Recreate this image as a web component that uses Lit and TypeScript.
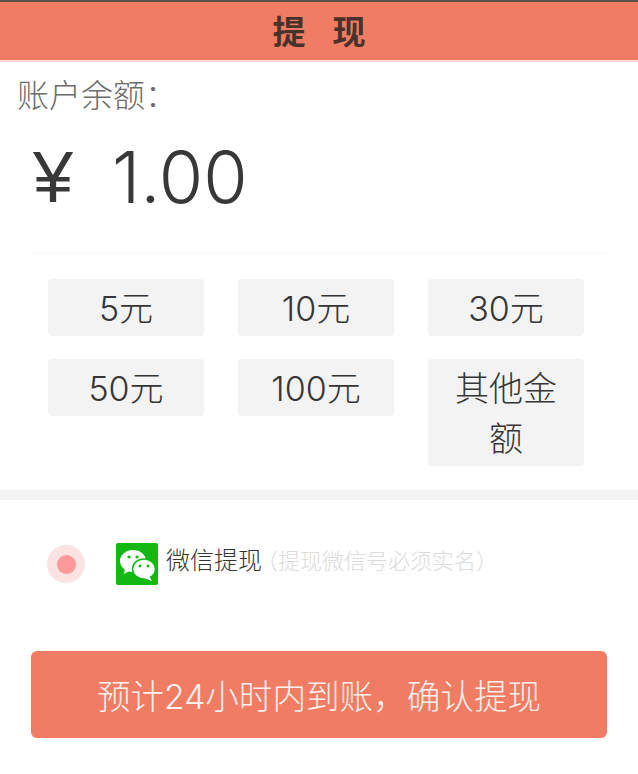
import { LitElement, html, css } from "lit";
import { customElement } from "lit/decorators.js";

@customElement("app-root")
export class AppRoot extends LitElement {
  static styles = css`
    :host { display: block; width: 638px; height: 774px; background: #fff; overflow: hidden;
      font-family: "Noto Sans CJK SC", sans-serif; color: #3c3c3c; }
    .head { height: 58px; border-top: 2px solid #5a5148; background: #f07c64; border-bottom: 2px solid #fbd9d2;
      display: flex; align-items: center; justify-content: center; font-size: 33px; line-height: 40px; font-weight: 700; color: #47332c; gap: 27px; }
    .head span { position: relative; top: -1px; }
    .label { padding: 13px 0 0 17px; font-size: 32px; line-height: 36px; color: #6c6c6c; height: 39px; font-weight: 300; }
    .amount { display: flex; align-items: center; height: 96px; margin-top: 15px; padding-left: 33px; font-size: 72px; color: #383838; line-height: 96px; font-family: "Inter", "Liberation Sans", sans-serif; font-weight: 300; }
    .yen { width: 79px; font-size: 72px; font-weight: 400; font-family: "Liberation Sans", sans-serif; }
    .rule { height: 2px; background: #fbfbfb; margin: 27px 31px 0; }
    .grid { display: grid; grid-template-columns: repeat(3, 156px); column-gap: 34px; row-gap: 23px; padding: 25px 0 0 48px; align-items: start; }
    .opt { background: #f3f3f3; border-radius: 4px; text-align: center; font-size: 34px; line-height: 50px; padding: 5px 16px 2px; color: #363636; font-family: "Inter", "Noto Sans CJK SC", sans-serif; font-weight: 300; }
    .sep { height: 10px; background: #f3f3f3; margin-top: 24px; }
    .pay { display: flex; align-items: center; height: 42px; margin-top: 43px; padding-left: 47px; }
    .radio { width: 38px; height: 38px; border-radius: 50%; background: #fbe3e4; display: flex; align-items: center; justify-content: center; flex: none; }
    .radio i { display: block; width: 19px; height: 19px; border-radius: 50%; background: #fc9a9a; }
    .wx { margin-left: 31px; width: 42px; height: 42px; flex: none; display: block; }
    .name { margin-left: 8px; font-size: 24px; line-height: 36px; color: #333; white-space: nowrap; padding-bottom: 10px; font-weight: 300; }
    .hint { margin-left: -6px; font-size: 22px; line-height: 36px; color: #dcdcdc; white-space: nowrap; padding-bottom: 10px; font-weight: 300; }
    .btn { margin: 66px 31px 0; height: 87px; border-radius: 6px; background: #f07c64; color: #fdf1ee; font-size: 33.6px; font-family: "Inter", "Noto Sans CJK SC", sans-serif; font-weight: 300; display: flex; align-items: center; justify-content: center; }
  `;

  render() {
    const opts = ["5元", "10元", "30元", "50元", "100元", "其他金额"];
    return html`
      <div class="head"><span>提</span><span>现</span></div>
      <div class="label">账户余额\uFF1A</div>
      <div class="amount"><span class="yen">¥</span><span>1.00</span></div>
      <div class="rule"></div>
      <div class="grid">
        ${opts.map((o) => html`<div class="opt">${o}</div>`)}
      </div>
      <div class="sep"></div>
      <div class="pay">
        <div class="radio"><i></i></div>
        <svg class="wx" viewBox="0 0 42 42">
          <rect width="42" height="42" rx="2" fill="#14b814"/>
          <ellipse cx="17" cy="18" rx="13" ry="11" fill="#fff"/>
          <path d="M9 25 L8 31 L15 27 Z" fill="#fff"/>
          <circle cx="13" cy="14" r="1.6" fill="#14b814"/>
          <circle cx="21" cy="14" r="1.6" fill="#14b814"/>
          <ellipse cx="28" cy="26" rx="11.5" ry="10" fill="#fff" stroke="#14b814" stroke-width="1.5"/>
          <path d="M33 33 L36 38 L28 35 Z" fill="#fff"/>
          <circle cx="24" cy="23" r="1.4" fill="#14b814"/>
          <circle cx="32" cy="23" r="1.4" fill="#14b814"/>
        </svg>
        <span class="name">微信提现</span><span class="hint">\uFF08提现微信号必须实名\uFF09</span>
      </div>
      <div class="btn">预计24小时内到账\uFF0C确认提现</div>
    `;
  }
}
